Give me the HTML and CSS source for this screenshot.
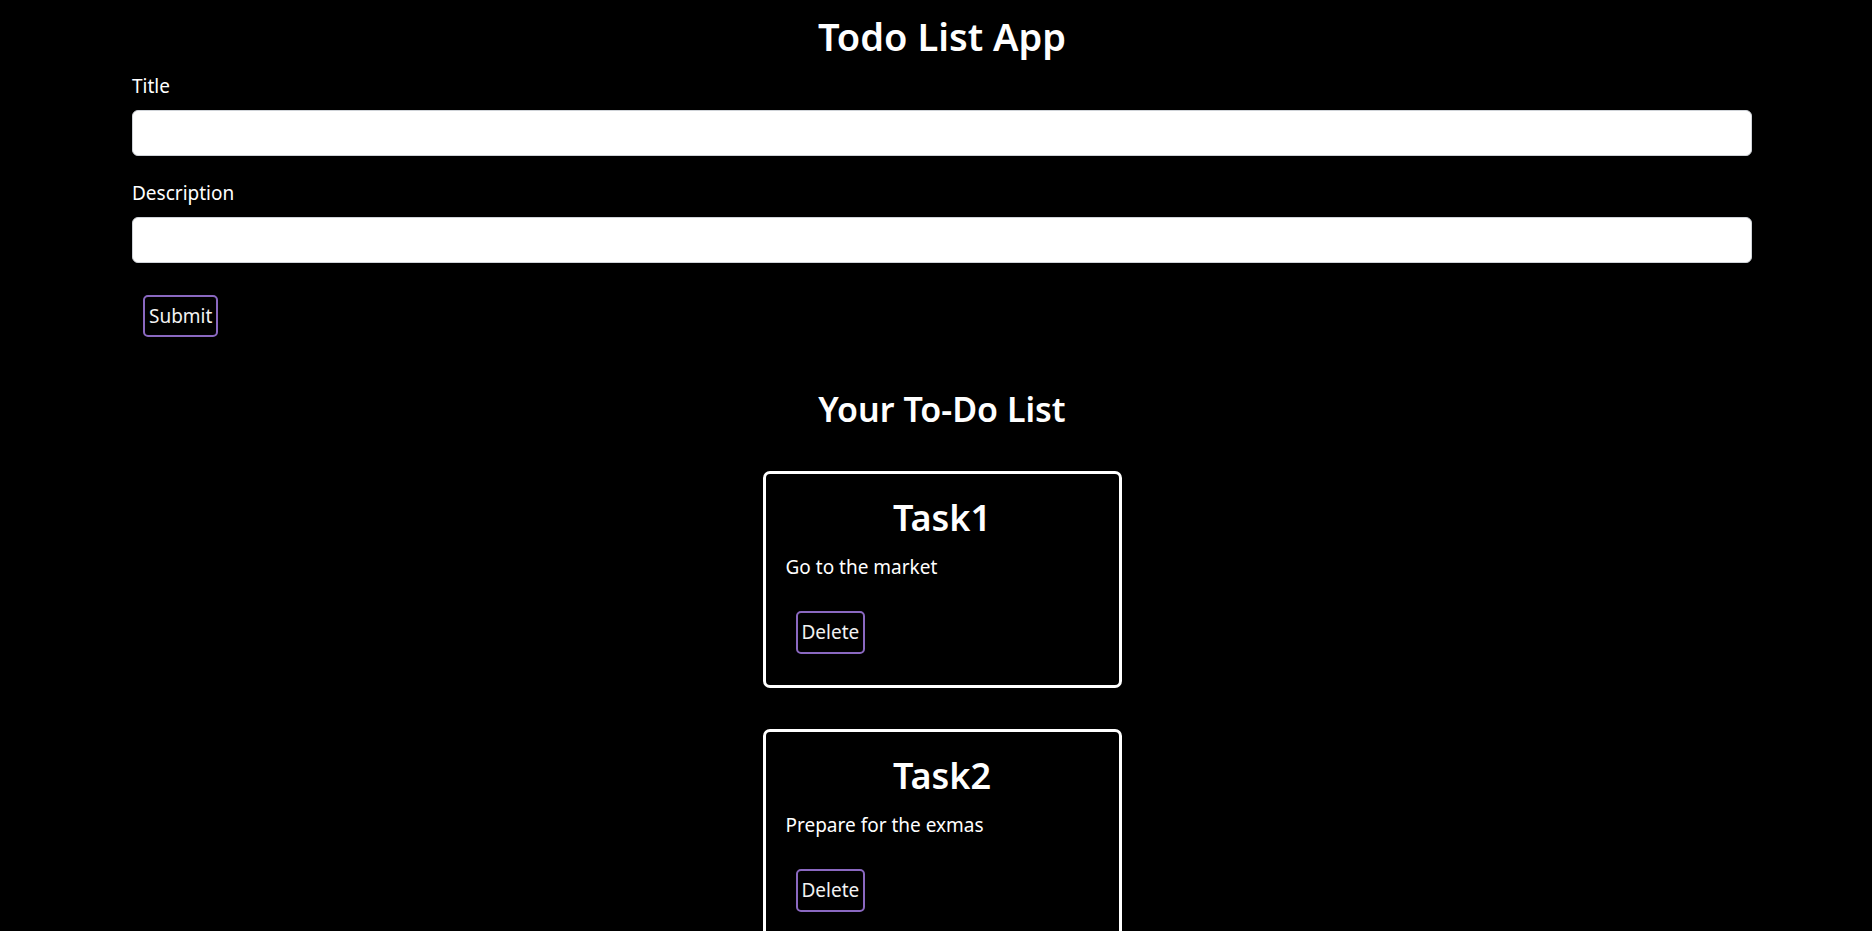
FILE: index.html
```html
<!DOCTYPE html>
<html lang="en">
<head>
<meta charset="utf-8">
<title>Todo List App</title>
<link rel="stylesheet" href="styles.css">
</head>
<body>
<main class="app">
  <h1 class="app-title">Todo List App</h1>
  <form class="todo-form">
    <div class="field">
      <label class="field-label" for="title">Title</label>
      <input class="field-input" id="title" type="text">
    </div>
    <div class="field">
      <label class="field-label" for="desc">Description</label>
      <input class="field-input" id="desc" type="text">
    </div>
    <button class="btn" type="button">Submit</button>
  </form>
  <section class="todo-list">
    <h2 class="list-title">Your To-Do List</h2>
    <div class="card">
      <h3 class="card-title">Task1</h3>
      <p class="card-text">Go to the market</p>
      <button class="btn" type="button">Delete</button>
    </div>
    <div class="card">
      <h3 class="card-title">Task2</h3>
      <p class="card-text">Prepare for the exmas</p>
      <button class="btn" type="button">Delete</button>
    </div>
  </section>
</main>
</body>
</html>
```
FILE: styles.css
```css
* { box-sizing: border-box; }
html, body { background: #000; }
body {
  margin: 0;
  color: #fff;
  font-family: "Noto Sans", "Open Sans", sans-serif;
}
.app {
  padding: 12px 120px 40px 132px;
}
.app-title {
  margin: 0 0 14px;
  font-size: 38px;
  line-height: 48px;
  font-weight: 600;
  text-align: center;
}
.todo-form {
  display: flex;
  flex-direction: column;
  align-items: flex-start;
}
.field {
  width: 100%;
  display: flex;
  flex-direction: column;
  margin-bottom: 25px;
}
.field:last-of-type { margin-bottom: 22px; }
.field-label {
  font-size: 19px;
  line-height: 24px;
  margin-bottom: 12px;
}
.field-input {
  height: 46px;
  width: 100%;
  background: #fff;
  border: 1px solid #cfd3d8;
  border-radius: 6px;
  font-size: 19px;
  padding: 0 14px;
}
.btn {
  margin: 10px;
  height: 43px;
  padding: 0 4px;
  background: #000;
  color: #f2f2f2;
  border: 2px solid #8a68c0;
  border-radius: 5px;
  font-family: "Noto Sans", "Open Sans", sans-serif;
  font-size: 19px;
  line-height: 1;
}
.todo-form .btn { margin-left: 11px; height: 42px; }
.todo-list {
  display: flex;
  flex-direction: column;
  align-items: center;
}
.list-title {
  margin: 38px 0 38px;
  font-size: 34px;
  line-height: 48px;
  font-weight: 600;
}
.card {
  width: 359px;
  border: 3px solid #fff;
  border-radius: 7px;
  padding: 21px 20px 21px;
  margin-bottom: 41px;
}
.card-title {
  margin: 0 0 14px;
  font-size: 36px;
  line-height: 46px;
  font-weight: 600;
  text-align: center;
}
.card-text {
  margin: 0 0 22px;
  font-size: 19px;
  line-height: 24px;
}
```
